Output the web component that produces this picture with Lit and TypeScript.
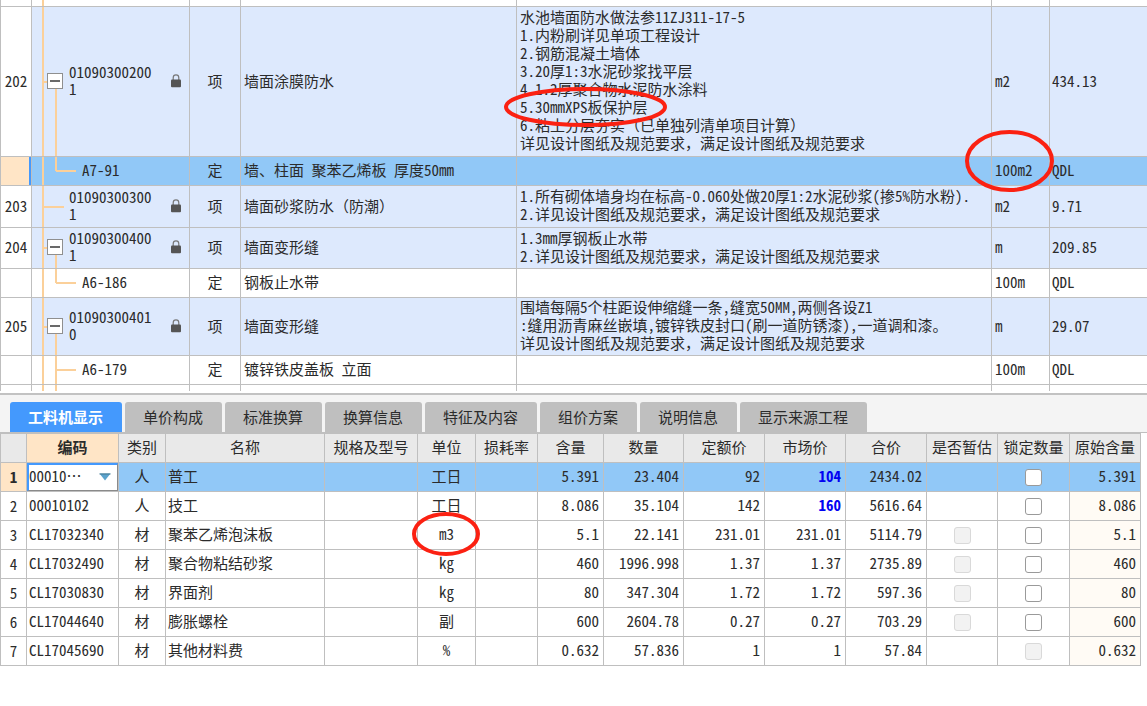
import { LitElement, html, css, svg, nothing } from "lit";
import { customElement, state } from "lit/decorators.js";
import { classMap } from "lit/directives/class-map.js";

interface BillRow {
  no: string;
  code: string;
  kind: string;
  name: string;
  feature: string[];
  unit: string;
  qty: string;
  size: string;
  tree: "parent" | "leaf" | "last-child" | "child";
  selected?: boolean;
  markFeature?: number;
  markUnit?: boolean;
}

interface Resource {
  code: string;
  kind: string;
  name: string;
  unit: string;
  content: string;
  amount: string;
  fixedPrice: string;
  marketPrice: string;
  total: string;
  estimate: boolean;
  lockable: boolean;
  original: string;
  edited?: boolean;
  markUnit?: boolean;
}

const BILL: BillRow[] = [
  {
    no: "202", code: "010903002001", kind: "项", name: "墙面涂膜防水",
    feature: [
      "水池墙面防水做法参11ZJ311-17-5",
      "1.内粉刷详见单项工程设计",
      "2.钢筋混凝土墙体",
      "3.20厚1:3水泥砂浆找平层",
      "4.1.2厚聚合物水泥防水涂料",
      "5.30mmXPS板保护层",
      "6.粘土分层夯实（已单独列清单项目计算）",
      "详见设计图纸及规范要求，满足设计图纸及规范要求",
    ],
    unit: "m2", qty: "434.13", size: "h150", tree: "parent", markFeature: 5,
  },
  { no: "", code: "A7-91", kind: "定", name: "墙、柱面 聚苯乙烯板 厚度50mm", feature: [], unit: "100m2", qty: "QDL", size: "h29", tree: "last-child", selected: true, markUnit: true },
  {
    no: "203", code: "010903003001", kind: "项", name: "墙面砂浆防水（防潮）",
    feature: ["1.所有砌体墙身均在标高-0.060处做20厚1:2水泥砂浆(掺5%防水粉).", "2.详见设计图纸及规范要求，满足设计图纸及规范要求"],
    unit: "m2", qty: "9.71", size: "h42", tree: "leaf",
  },
  {
    no: "204", code: "010903004001", kind: "项", name: "墙面变形缝",
    feature: ["1.3mm厚钢板止水带", "2.详见设计图纸及规范要求，满足设计图纸及规范要求"],
    unit: "m", qty: "209.85", size: "h41", tree: "parent",
  },
  { no: "", code: "A6-186", kind: "定", name: "钢板止水带", feature: [], unit: "100m", qty: "QDL", size: "h29", tree: "last-child" },
  {
    no: "205", code: "010903004010", kind: "项", name: "墙面变形缝",
    feature: ["围墙每隔5个柱距设伸缩缝一条,缝宽50MM,两侧各设Z1", ":缝用沥青麻丝嵌填,镀锌铁皮封口(刷一道防锈漆),一道调和漆。", "详见设计图纸及规范要求，满足设计图纸及规范要求"],
    unit: "m", qty: "29.07", size: "h58", tree: "parent",
  },
  { no: "", code: "A6-179", kind: "定", name: "镀锌铁皮盖板 立面", feature: [], unit: "100m", qty: "QDL", size: "h29", tree: "child" },
];

const RESOURCES: Resource[] = [
  { code: "00010…", kind: "人", name: "普工", unit: "工日", content: "5.391", amount: "23.404", fixedPrice: "92", marketPrice: "104", total: "2434.02", estimate: false, lockable: true, original: "5.391", edited: true },
  { code: "00010102", kind: "人", name: "技工", unit: "工日", content: "8.086", amount: "35.104", fixedPrice: "142", marketPrice: "160", total: "5616.64", estimate: false, lockable: true, original: "8.086", edited: true },
  { code: "CL17032340", kind: "材", name: "聚苯乙烯泡沫板", unit: "m3", content: "5.1", amount: "22.141", fixedPrice: "231.01", marketPrice: "231.01", total: "5114.79", estimate: true, lockable: true, original: "5.1", markUnit: true },
  { code: "CL17032490", kind: "材", name: "聚合物粘结砂浆", unit: "kg", content: "460", amount: "1996.998", fixedPrice: "1.37", marketPrice: "1.37", total: "2735.89", estimate: true, lockable: true, original: "460" },
  { code: "CL17030830", kind: "材", name: "界面剂", unit: "kg", content: "80", amount: "347.304", fixedPrice: "1.72", marketPrice: "1.72", total: "597.36", estimate: true, lockable: true, original: "80" },
  { code: "CL17044640", kind: "材", name: "膨胀螺栓", unit: "副", content: "600", amount: "2604.78", fixedPrice: "0.27", marketPrice: "0.27", total: "703.29", estimate: true, lockable: true, original: "600" },
  { code: "CL17045690", kind: "材", name: "其他材料费", unit: "%", content: "0.632", amount: "57.836", fixedPrice: "1", marketPrice: "1", total: "57.84", estimate: false, lockable: false, original: "0.632" },
];

const TABS = ["工料机显示", "单价构成", "标准换算", "换算信息", "特征及内容", "组价方案", "说明信息", "显示来源工程"];

const HEADERS = ["类别", "名称", "规格及型号", "单位", "损耗率", "含量", "数量", "定额价", "市场价", "合价", "是否暂估", "锁定数量", "原始含量"];

const shared = css`
  :host {
    display: block;
    font: 15px/18px "Noto Sans CJK SC", sans-serif;
    font-feature-settings: "hwid" 1;
    color: #2b2b2b;
  }
  table {
    width: 100%;
    table-layout: fixed;
    border-collapse: separate;
    border-spacing: 0;
    border-left: 1px solid #bfbfbf;
  }
  th,
  td {
    box-sizing: border-box;
    padding: 0 0 2px;
    border-right: 1px solid #bfbfbf;
    border-bottom: 1px solid #bfbfbf;
    white-space: nowrap;
    font-weight: 400;
    text-align: left;
  }
  .mid {
    text-align: center;
  }
  .full {
    font-feature-settings: normal;
  }
  .mark {
    position: absolute;
    overflow: visible;
    pointer-events: none;
    z-index: 1;
    fill: none;
    stroke: #fb2112;
    stroke-width: 4;
  }
`;

/* Latin is set half-width; full-width Chinese punctuation keeps its em box. */
const mixed = (text: string) =>
  text.split(/([（），]+)/).map((part, i) => (i % 2 ? html`<span class="full">${part}</span>` : part));

const mark = (name: string, w: number, h: number) => html`
  <svg class="mark ${name}" width=${w} height=${h} viewBox="0 0 ${w} ${h}" aria-hidden="true">
    ${svg`<ellipse cx=${w / 2} cy=${h / 2} rx=${w / 2 - 2} ry=${h / 2 - 2}></ellipse>`}
  </svg>
`;

@customElement("bill-table")
class BillTable extends LitElement {
  static styles = [
    shared,
    css`
      .c-no { width: 31px; }
      .c-code { width: 158px; }
      .c-kind { width: 51px; }
      .c-name { width: 276px; }
      .c-unit { width: 58px; }
      .c-qty { width: 97px; }
      .edge-top { height: 7px; }
      .edge-bottom { height: 6px; }
      .edge-bottom td { border-bottom: 0; }
      .h29 { height: 29px; }
      .h41 { height: 41px; }
      .h42 { height: 42px; }
      .h58 { height: 58px; }
      .h150 { height: 150px; }
      td { padding-left: 3px; }
      td:last-child { border-right: 0; padding-left: 2px; }
      .kind, .no { padding-left: 0; }
      .feature { padding-bottom: 3px; }
      .item td { background-color: #dde9fd; }
      .selected td { background-color: #91c8f7; }
      .selected .no {
        background-color: #ffe5c6;
        box-shadow: inset -2px 0 #4499fd;
      }
      .code {
        padding-left: 0;
        background-repeat: no-repeat;
        --line: linear-gradient(#fbd09a, #fbd09a);
      }
      .trunk {
        background-image: var(--line);
        background-size: 2px 100%;
        background-position: 10px 0;
      }
      .trunk.twin {
        background-image: var(--line), var(--line);
        background-size: 2px 100%, 2px 100%;
        background-position: 10px 0, 23px 0;
      }
      .parent {
        background-image: var(--line), var(--line), var(--line);
        background-size: 2px 100%, 6px 2px, 2px 50%;
        background-position: 10px 0, 12px 50%, 23px 100%;
      }
      .leaf {
        background-image: var(--line), var(--line);
        background-size: 2px 100%, 20px 2px;
        background-position: 10px 0, 12px 50%;
      }
      .last-child {
        background-image: var(--line), var(--line), var(--line);
        background-size: 2px 100%, 20px 2px, 2px 50%;
        background-position: 10px 0, 24px 50%, 23px 0;
      }
      .child {
        background-image: var(--line), var(--line), var(--line);
        background-size: 2px 100%, 20px 2px, 2px 100%;
        background-position: 10px 0, 24px 50%, 23px 0;
      }
      .node {
        display: flex;
        align-items: center;
        padding: 0 8px 0 15px;
      }
      .node.sub { padding-left: 50px; }
      .slot { width: 16px; margin-right: 6px; display: flex; }
      .toggle {
        box-sizing: border-box;
        width: 16px;
        height: 16px;
        padding: 0;
        border: 1px solid #8f8f8f;
        background: #fff;
        display: grid;
        place-items: center;
      }
      .text {
        width: 86px;
        line-height: 17px;
        padding-bottom: 2px;
        white-space: normal;
        word-break: break-all;
      }
      .lock { margin-left: auto; }
      .line { position: relative; }
      .unit { position: relative; }
      .m-feature { left: -16px; top: -11px; }
      .m-unit { left: -30px; top: -31px; }
    `,
  ];

  render() {
    return html`
      <table aria-label="清单">
        <colgroup>
          <col class="c-no" /><col class="c-code" /><col class="c-kind" /><col class="c-name" />
          <col /><col class="c-unit" /><col class="c-qty" />
        </colgroup>
        <tbody>
          <tr class="edge-top"><td></td><td class="code trunk"></td><td></td><td></td><td></td><td></td><td></td></tr>
          ${BILL.map((r) => this.row(r))}
          <tr class="edge-bottom"><td></td><td class="code trunk twin"></td><td></td><td></td><td></td><td></td><td></td></tr>
        </tbody>
      </table>
    `;
  }

  private row(r: BillRow) {
    return html`
      <tr class=${classMap({ [r.size]: true, item: r.no !== "", selected: !!r.selected })}>
        <th class="no mid" scope="row">${r.no}</th>
        <td class="code ${r.tree}">
          ${r.no
            ? html`<div class="node">
                <span class="slot">
                  ${r.tree === "parent"
                    ? html`<button class="toggle" aria-label="折叠 ${r.code}">
                        <svg width="10" height="2" viewBox="0 0 10 2"><path d="M0 1h10" stroke="#444" stroke-width="1.6" /></svg>
                      </button>`
                    : nothing}
                </span>
                <span class="text">${r.code}</span>
                <svg class="lock" width="10" height="14" viewBox="0 0 10 14" aria-label="已锁定">
                  <path d="M2.2 6V3.7a2.8 2.8 0 0 1 5.6 0V6" fill="none" stroke="#777" stroke-width="1.2" />
                  <rect x="0" y="5.6" width="10" height="7.6" rx="1" fill="#555" />
                </svg>
              </div>`
            : html`<div class="node sub"><span>${r.code}</span></div>`}
        </td>
        <td class="kind mid">${r.kind}</td>
        <td>${mixed(r.name)}</td>
        <td class="feature">
          ${r.feature.map(
            (line, i) => html`<div class="line">${mixed(line)}${r.markFeature === i ? mark("m-feature", 163, 40) : nothing}</div>`
          )}
        </td>
        <td><div class="unit">${r.unit}${r.markUnit ? mark("m-unit", 89, 62) : nothing}</div></td>
        <td>${r.qty}</td>
      </tr>
    `;
  }
}

@customElement("resource-table")
class ResourceTable extends LitElement {
  static styles = [
    shared,
    css`
      .wrap { padding-right: 6px; }
      table { border-top: 1px solid #bfbfbf; }
      .w26 { width: 26px; }
      .w47 { width: 47px; }
      .w58 { width: 58px; }
      .w62 { width: 62px; }
      .w66 { width: 66px; }
      .w71 { width: 71px; }
      .w72 { width: 72px; }
      .w80 { width: 80px; }
      .w81 { width: 81px; }
      .w92 { width: 92px; }
      .w93 { width: 93px; }
      tr { height: 29px; }
      thead th { background: #e9e9e9; text-align: center; }
      thead .current { background: #ffe5c6; font-weight: 700; }
      tbody th { padding-bottom: 0; }
      td { padding-left: 2px; }
      td.mid { padding-left: 0; }
      td.box { padding: 0; }
      .num { text-align: right; padding-right: 4px; }
      .edited { color: #0202f2; font-weight: 700; }
      .original { background: #fffbf5; }
      .selected td { background: #91c8f7; }
      .selected th { background: #ffe5c6; font-weight: 700; }
      .selected .picker { padding: 0; background: #fff; }
      .combo { display: grid; align-items: center; }
      .combo > * { grid-area: 1 / 1; }
      .combo svg { justify-self: end; margin-right: 7px; pointer-events: none; }
      select {
        appearance: none;
        box-sizing: border-box;
        width: 100%;
        height: 28px;
        margin: 0;
        padding: 0 20px 4px 0;
        border: 1px solid #8a8a8a;
        border-top: 2px solid #4499fd;
        border-left: 2px solid #4499fd;
        border-radius: 0;
        background: #fff;
        color: inherit;
        font: inherit;
        font-feature-settings: inherit;
      }
      input {
        appearance: none;
        box-sizing: border-box;
        display: block;
        width: 17px;
        height: 17px;
        margin: 0 auto;
        border: 1px solid #9a9a9a;
        border-radius: 3px;
        background: #fff;
      }
      input:checked { background: #4499fd; }
      input:disabled { background: #f2f2f2; border-color: #d9d9d9; }
      .unit { position: relative; }
      .m-unit { left: 50%; top: 50%; margin: -22px 0 0 -35px; }
    `,
  ];

  render() {
    const widths = ["w26", "w92", "w47", "", "w93", "w58", "w62", "w66", "w80", "w81", "w81", "w81", "w71", "w72", "w71"];
    return html`
      <div class="wrap">
        <table aria-label="工料机显示">
          <colgroup>${widths.map((w) => html`<col class=${w} />`)}</colgroup>
          <thead>
            <tr>
              <th></th>
              <th class="current" scope="col">编码</th>
              ${HEADERS.map((h) => html`<th scope="col">${h}</th>`)}
            </tr>
          </thead>
          <tbody>${RESOURCES.map((r, i) => this.row(r, i))}</tbody>
        </table>
      </div>
    `;
  }

  private row(r: Resource, i: number) {
    const selected = i === 0;
    return html`
      <tr class=${classMap({ selected })}>
        <th class="mid" scope="row">${i + 1}</th>
        ${selected
          ? html`<td class="picker">
              <div class="combo">
                <select aria-label="编码"><option>${r.code}</option></select>
                <svg width="12" height="8" viewBox="0 0 12 8"><path d="M0.5 0.5h11L6 7.5z" fill="#5ba3cc" /><path d="M0.5 1h11" stroke="#47788f" /></svg>
              </div>
            </td>`
          : html`<td>${r.code}</td>`}
        <td class="mid">${r.kind}</td>
        <td>${r.name}</td>
        <td></td>
        <td class="mid"><div class="unit">${r.unit}${r.markUnit ? mark("m-unit", 68, 44) : nothing}</div></td>
        <td></td>
        <td class="num">${r.content}</td>
        <td class="num">${r.amount}</td>
        <td class="num">${r.fixedPrice}</td>
        <td class=${classMap({ num: true, edited: !!r.edited })}>${r.marketPrice}</td>
        <td class="num">${r.total}</td>
        <td class="box">${r.estimate ? html`<input type="checkbox" disabled aria-label="是否暂估 ${r.name}" />` : nothing}</td>
        <td class="box"><input type="checkbox" ?disabled=${!r.lockable} aria-label="锁定数量 ${r.name}" /></td>
        <td class="num original">${r.original}</td>
      </tr>
    `;
  }
}

@customElement("app-root")
class AppRoot extends LitElement {
  static styles = css`
    :host {
      display: block;
      min-height: 100vh;
      background: #fff;
      font: 15px/18px "Noto Sans CJK SC", sans-serif;
    }
    .bill {
      padding-bottom: 2px;
      border-bottom: 2px solid #c2c2c2;
    }
    .tabs {
      display: flex;
      gap: 3px;
      padding: 7px 10px 0;
      background: #f4f4f4;
      border-bottom: 1px solid #bfbfbf;
    }
    .tab {
      height: 30px;
      padding: 0 19px 0 18px;
      border: 0;
      border-radius: 3px 3px 0 0;
      background: #bfbfbf;
      color: #2b2b2b;
      font: inherit;
      white-space: nowrap;
    }
    .tab.active {
      background: #4499fd;
      color: #fff;
      font-weight: 700;
    }
  `;

  @state() private active = 0;

  render() {
    return html`
      <section class="bill"><bill-table></bill-table></section>
      <nav class="tabs" role="tablist">
        ${TABS.map(
          (t, i) => html`<button
            class=${classMap({ tab: true, active: i === this.active })}
            role="tab"
            aria-selected=${i === this.active ? "true" : "false"}
            @click=${() => (this.active = i)}
          >${t}</button>`
        )}
      </nav>
      <resource-table></resource-table>
    `;
  }
}
